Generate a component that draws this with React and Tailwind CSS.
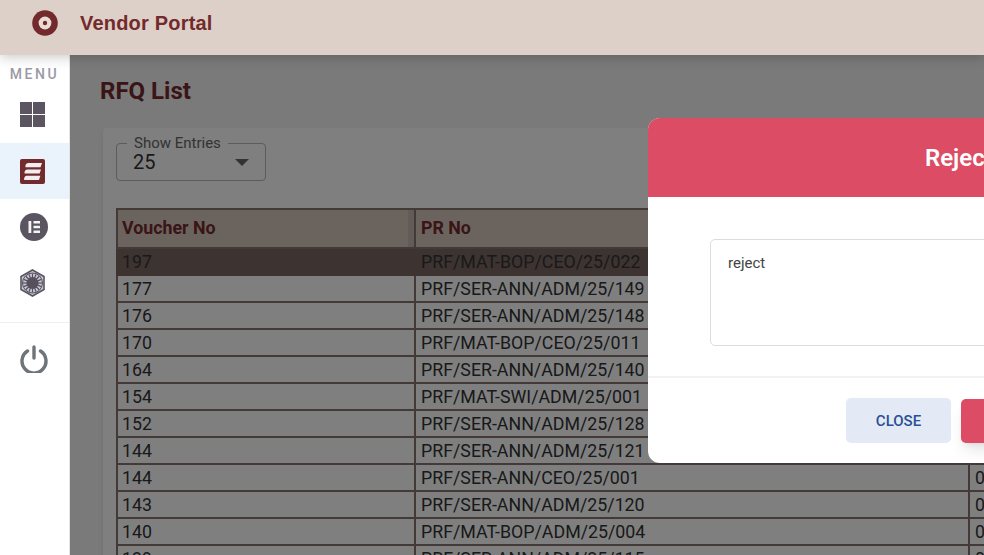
const rows = [
  ["197", "PRF/MAT-BOP/CEO/25/022"],
  ["177", "PRF/SER-ANN/ADM/25/149"],
  ["176", "PRF/SER-ANN/ADM/25/148"],
  ["170", "PRF/MAT-BOP/CEO/25/011"],
  ["164", "PRF/SER-ANN/ADM/25/140"],
  ["154", "PRF/MAT-SWI/ADM/25/001"],
  ["152", "PRF/SER-ANN/ADM/25/128"],
  ["144", "PRF/SER-ANN/ADM/25/121"],
  ["144", "PRF/SER-ANN/CEO/25/001"],
  ["143", "PRF/SER-ANN/ADM/25/120"],
  ["140", "PRF/MAT-BOP/ADM/25/004"],
  ["139", "PRF/SER-ANN/ADM/25/115"],
];

const rays = Array.from({ length: 16 }, (_, i) => (i * Math.PI) / 8);

function NavItem({ active, children }) {
  return (
    <div className={"flex h-[56px] w-full items-center justify-start pl-[20px] " + (active ? "bg-[#eaf2fb]" : "")}>
      {children}
    </div>
  );
}

export default function App() {
  return (
    <div className="flex h-screen w-full flex-col overflow-hidden bg-white font-['Roboto',sans-serif]">
      <header className="relative z-10 flex h-[55px] shrink-0 items-center bg-[#ddd0c8] pb-[9px] pl-[32px] shadow-[0_2px_12px_rgba(0,0,0,0.22)]">
        <svg width="26" height="26" viewBox="0 0 26 26">
          <circle cx="13" cy="13" r="12.8" fill="#722a2c" />
          <circle cx="13" cy="13" r="6.4" fill="#e8dcd4" />
          <circle cx="13" cy="13" r="2.2" fill="#722a2c" />
        </svg>
        <div className="ml-[22px] font-['Liberation_Sans',sans-serif] text-[20px] font-bold tracking-[0.2px] text-[#722a2c]">Vendor Portal</div>
      </header>
      <div className="flex min-h-0 flex-1">
        <aside className="flex w-[70px] shrink-0 flex-col items-center border-r border-[#e4e4e4] bg-white">
          <div className="mt-[10px] text-[14px] leading-[18px] font-medium tracking-[2.6px] text-[#9a9aa6]">MENU</div>
          <div className="mt-[6px] flex w-full flex-col">
            <div className="flex h-[54px] items-center justify-start pb-[3px] pl-[20px]">
              <svg width="25" height="25" viewBox="0 0 25 25" fill="#5a5560">
                <rect x="0" y="0" width="12" height="12" />
                <rect x="13" y="0" width="12" height="12" />
                <rect x="0" y="13" width="12" height="12" />
                <rect x="13" y="13" width="12" height="12" />
              </svg>
            </div>
            <NavItem active>
              <svg width="25" height="25" viewBox="0 0 25 25">
                <rect width="25" height="25" rx="2" fill="#722a2c" />
                <path d="M8 4H22L20.5 8.2H5.5C5 6.2 6 4.5 8 4Z M7 10.4H21L19.6 14.6H4.6C4.2 12.6 5 10.9 7 10.4Z M6.5 16.8H20.4L19 21H4.2C3.8 19 4.6 17.3 6.5 16.8Z" fill="#f2eef0" />
              </svg>
            </NavItem>
            <NavItem>
              <svg width="28" height="28" viewBox="0 0 28 28">
                <circle cx="14" cy="14" r="14" fill="#5a5560" />
                <path d="M8.5 8h2.8v12H8.5z M13.5 8H20v2.5h-6.5z M13.5 12.8H20v2.5h-6.5z M13.5 17.5H20V20h-6.5z" fill="#f4f4f6" />
              </svg>
            </NavItem>
            <NavItem>
              <svg width="25" height="28" viewBox="0 0 25 28">
                <path d="M12.5 1 L24 7.5 V20.5 L12.5 27 L1 20.5 V7.5 Z" fill="#c9c6d6" stroke="#5a5560" strokeWidth="1.6" />
                {rays.map((a, i) => (
                  <line
                    key={i}
                    x1={12.5 + 5 * Math.cos(a)}
                    y1={14 + 5 * Math.sin(a)}
                    x2={12.5 + 9.5 * Math.cos(a)}
                    y2={14 + 9.5 * Math.sin(a)}
                    stroke="#55505c"
                    strokeWidth="1.2"
                  />
                ))}
                <circle cx="12.5" cy="14" r="6" fill="#55505c" />
                <circle cx="12.5" cy="14" r="10" fill="none" stroke="#55505c" strokeWidth="1" />
              </svg>
            </NavItem>
          </div>
          <div className="mt-[11px] flex w-full flex-col items-start border-t border-[#efefef] pt-[22px] pl-[20px]">
            <svg width="28" height="28" viewBox="0 0 28 28" fill="none" stroke="#6f7478" strokeWidth="3.4" strokeLinecap="round">
              <path d="M14 2 V13" />
              <path d="M7.5 6 A12 12 0 1 0 20.5 6" />
            </svg>
          </div>
        </aside>
        <main className="relative min-w-0 flex-1 bg-[#f4f4f4] pt-[20px] pl-[30px]">
          <h1 className="text-[24px] leading-[32px] font-bold text-[#742a2e]">RFQ List</h1>
          <section className="mt-[21px] ml-[3px] w-[1100px] rounded bg-white pt-[15px] pl-[13px] shadow-md">
            <div className="relative flex h-[38px] w-[150px] items-center justify-between rounded border border-[#b8b8b8] pr-[16px] pl-[16px]">
              <span className="absolute top-[-9px] left-[10px] bg-white px-[7px] text-[15px] leading-[16px] text-[#666]">Show Entries</span>
              <span className="text-[20px] leading-[24px] text-[#333]">25</span>
              <svg width="14" height="7" viewBox="0 0 14 7" fill="#666"><path d="M0 0h14L7 7z" /></svg>
            </div>
            <table className="mt-[27px] w-[1000px] table-fixed border-collapse text-[17.8px] leading-[22px] text-[#333]">
              <colgroup>
                <col className="w-[298px]" />
                <col className="w-[554px]" />
                <col />
              </colgroup>
              <thead>
                <tr className="h-[39px] bg-[#d6c8bc] text-left font-bold text-[#742a2e]">
                  <th className="relative border-2 border-[#86736c] pb-[1px] pl-[4px] font-bold">
                    Voucher No
                    <span className="absolute top-0 right-0 h-full w-[6px] bg-[#c4b8b0]" />
                  </th>
                  <th className="border-2 border-[#86736c] pb-[1px] pl-[5px] font-bold">PR No</th>
                  <th className="border-2 border-[#86736c]" />
                </tr>
              </thead>
              <tbody>
                {rows.map((r, i) => (
                  <tr key={i} className={"h-[27px] " + (i === 0 ? "bg-[#7a6662]" : "bg-white")}>
                    <td className={"border-2 pl-[4px] " + (i === 0 ? "border-[#7a6662]" : "border-[#86736c]")}>{r[0]}</td>
                    <td className={"border-2 pl-[5px] " + (i === 0 ? "border-[#7a6662]" : "border-[#86736c]")}>{r[1]}</td>
                    <td className={"border-2 pl-[5px] " + (i === 0 ? "border-[#7a6662]" : "border-[#86736c]")}>0</td>
                  </tr>
                ))}
              </tbody>
            </table>
          </section>
          <div className="absolute inset-0 bg-black/50" />
        </main>
      </div>
      <div className="absolute top-[118px] left-[648px] z-20 w-[708px] overflow-hidden rounded-[12px] bg-white">
        <div className="flex h-[79px] items-center justify-center bg-[#dc4c64] text-[24px] font-semibold text-white">Reject Reason</div>
        <div className="flex h-[181px] border-b-2 border-[#f2f2f2] px-[62px] pt-[42px]">
          <div className="h-[107px] w-full rounded-[5px] border border-[#dcdcdc] px-[17px] py-[13px] text-[15px] leading-[20px] text-[#444]">reject</div>
        </div>
        <div className="flex h-[85px] items-start gap-[10px] pt-[20px] pl-[198px]">
          <button className="h-[45px] w-[105px] rounded-[5px] bg-[#e3eaf6] pt-[2px] text-[15px] font-medium text-[#2b4f94]">CLOSE</button>
          <button className="mt-[1px] h-[44px] w-[105px] rounded-[5px] bg-[#dc4c64] text-[15px] font-medium text-white shadow-lg">REJECT</button>
        </div>
      </div>
    </div>
  );
}
